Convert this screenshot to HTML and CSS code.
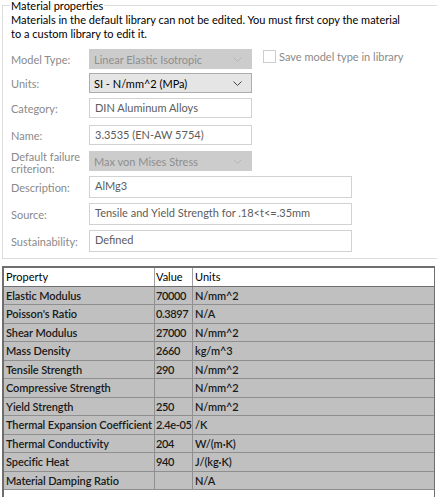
FILE: index.html
```html
<!DOCTYPE html>
<html>
<head>
<meta charset="utf-8">
<link rel="stylesheet" href="styles.css">
</head>
<body>
<fieldset class="group">
  <legend class="legend">Material properties</legend>
  <p class="note">Materials in the default library can not be edited. You must first copy the material to a custom library to edit it.</p>
  <div class="row r-model">
    <span class="label">Model Type:</span>
    <div class="select disabled"><span>Linear Elastic Isotropic</span><svg class="chev" width="9" height="5" viewBox="0 0 9 5"><path d="M0.5 0.5 L4.5 4.5 L8.5 0.5" fill="none" stroke="#b5b5b5" stroke-width="1"/></svg></div>
    <label class="check"><span class="box"></span>Save model type in library</label>
  </div>
  <div class="row r-units">
    <span class="label">Units:</span>
    <div class="select active"><span>SI - N/mm^2 (MPa)</span><svg class="chev" width="9" height="5" viewBox="0 0 9 5"><path d="M0.5 0.5 L4.5 4.5 L8.5 0.5" fill="none" stroke="#444" stroke-width="1"/></svg></div>
  </div>
  <div class="row r-cat">
    <span class="label">Category:</span>
    <div class="input">DIN Aluminum Alloys</div>
  </div>
  <div class="row r-name">
    <span class="label">Name:</span>
    <div class="input">3.3535 (EN-AW 5754)</div>
  </div>
  <div class="row r-fail">
    <span class="label two">Default failure criterion:</span>
    <div class="select disabled"><span>Max von Mises Stress</span><svg class="chev" width="9" height="5" viewBox="0 0 9 5"><path d="M0.5 0.5 L4.5 4.5 L8.5 0.5" fill="none" stroke="#b5b5b5" stroke-width="1"/></svg></div>
  </div>
  <div class="row r-desc">
    <span class="label">Description:</span>
    <div class="input wide">AlMg3</div>
  </div>
  <div class="row r-src">
    <span class="label">Source:</span>
    <div class="input wide">Tensile and Yield Strength for .18&lt;t&lt;=.35mm</div>
  </div>
  <div class="row r-sus">
    <span class="label">Sustainability:</span>
    <div class="input wide">Defined</div>
  </div>
</fieldset>

<div class="table">
  <div class="tr head"><div class="c c1">Property</div><div class="c c2">Value</div><div class="c c3">Units</div></div>
  <div class="tr"><div class="c c1">Elastic Modulus</div><div class="c c2">70000</div><div class="c c3">N/mm^2</div></div>
  <div class="tr"><div class="c c1">Poisson's Ratio</div><div class="c c2">0.3897</div><div class="c c3">N/A</div></div>
  <div class="tr"><div class="c c1">Shear Modulus</div><div class="c c2">27000</div><div class="c c3">N/mm^2</div></div>
  <div class="tr"><div class="c c1">Mass Density</div><div class="c c2">2660</div><div class="c c3">kg/m^3</div></div>
  <div class="tr"><div class="c c1">Tensile Strength</div><div class="c c2">290</div><div class="c c3">N/mm^2</div></div>
  <div class="tr"><div class="c c1">Compressive Strength</div><div class="c c2"></div><div class="c c3">N/mm^2</div></div>
  <div class="tr"><div class="c c1">Yield Strength</div><div class="c c2">250</div><div class="c c3">N/mm^2</div></div>
  <div class="tr"><div class="c c1">Thermal Expansion Coefficient</div><div class="c c2">2.4e-05</div><div class="c c3">/K</div></div>
  <div class="tr"><div class="c c1">Thermal Conductivity</div><div class="c c2">204</div><div class="c c3">W/(m·K)</div></div>
  <div class="tr"><div class="c c1">Specific Heat</div><div class="c c2">940</div><div class="c c3">J/(kg·K)</div></div>
  <div class="tr"><div class="c c1">Material Damping Ratio</div><div class="c c2"></div><div class="c c3">N/A</div></div>
  <div class="tail"></div>
</div>
</body>
</html>
```

FILE: styles.css
```css
html, body {
  margin: 0;
  padding: 0;
  background: #ffffff;
}
body {
  font-family: Lato, "Liberation Sans", sans-serif;
  font-size: 11px;
  color: #000;
  width: 437px;
  height: 497px;
  overflow: hidden;
}
.group {
  margin: 0 -10px 0 2px;
  padding: 0 0 7px 8px;
  border: 1px solid #dcdcdc;
  height: 250px;
  box-sizing: content-box;
  min-width: 0;
}
.legend {
  padding: 0 1px;
  margin-left: -1px;
  line-height: 11px;
  height: 11px;
}
.note {
  margin: 2px 0 0 0;
  line-height: 14px;
  width: 400px;
}
.row {
  display: flex;
  align-items: center;
  height: 20px;
}
.r-model { margin-top: 8px; }
.r-units { margin-top: 4px; }
.r-cat { margin-top: 5px; }
.r-name { margin-top: 7px; }
.r-fail { margin-top: 6px; }
.r-desc { margin-top: 5px; height: 22px; }
.r-src { margin-top: 5px; height: 22px; }
.r-sus { margin-top: 5px; height: 22px; }
.label {
  width: 78px;
  color: #8a8a8a;
  flex: none;
}
.label.two {
  line-height: 12px;
  margin-top: 4px;
}
.select {
  box-sizing: border-box;
  width: 163px;
  height: 20px;
  display: flex;
  align-items: center;
  justify-content: space-between;
  padding: 0 9px 0 4px;
  border: 1px solid #c9c9c9;
}
.select.disabled {
  background: #cccccc;
  color: #8e8e8e;
  border-color: #cccccc;
}
.select.active {
  background: #e5e5e5;
  border-color: #adadad;
  color: #000;
}
.chev { flex: none; }
.input {
  box-sizing: border-box;
  width: 163px;
  height: 20px;
  border: 1px solid #d2d2d2;
  padding: 0 5px;
  line-height: 18px;
  color: #5c5c5c;
  background: #fff;
}
.input.wide {
  width: 263px;
  height: 22px;
  line-height: 18px;
}
.check {
  display: flex;
  align-items: center;
  margin-left: 11px;
  margin-top: -6px;
  color: #8a8a8a;
}
.box {
  width: 11px;
  height: 11px;
  border: 1px solid #cdcdcd;
  margin-right: 3px;
  background: #fff;
}
.table {
  margin: 7px 0 0 2px;
  width: 433px;
  border-top: 2px solid #6f6f6f;
  border-left: 2px solid #6f6f6f;
  border-right: 1px solid #6f6f6f;
  box-sizing: border-box;
  background: #fff;
}
.tr {
  display: grid;
  grid-template-columns: 151px 38px 1fr;
  height: 18.5px;
  background: #c0c0c0;
  border-bottom: 1px solid #8f8f8f;
  box-sizing: border-box;
}
.tr.head {
  background: #ffffff;
  border-bottom: 1px solid #6f6f6f;
}
.c {
  padding-left: 2px;
  line-height: 17px;
  white-space: nowrap;
  overflow: hidden;
  border-right: 1px solid #8f8f8f;
  color: #1a1a1a;
  font-weight: 600;
  letter-spacing: -0.1px;
}
.c2 { padding-left: 1px; letter-spacing: -0.35px; }
.head .c {
  font-weight: 400;
  color: #000;
  letter-spacing: 0;
  border-right-color: #a0a0a0;
}
.c3 { border-right: none; }
.tail {
  height: 10px;
  background: #fff;
}
```
